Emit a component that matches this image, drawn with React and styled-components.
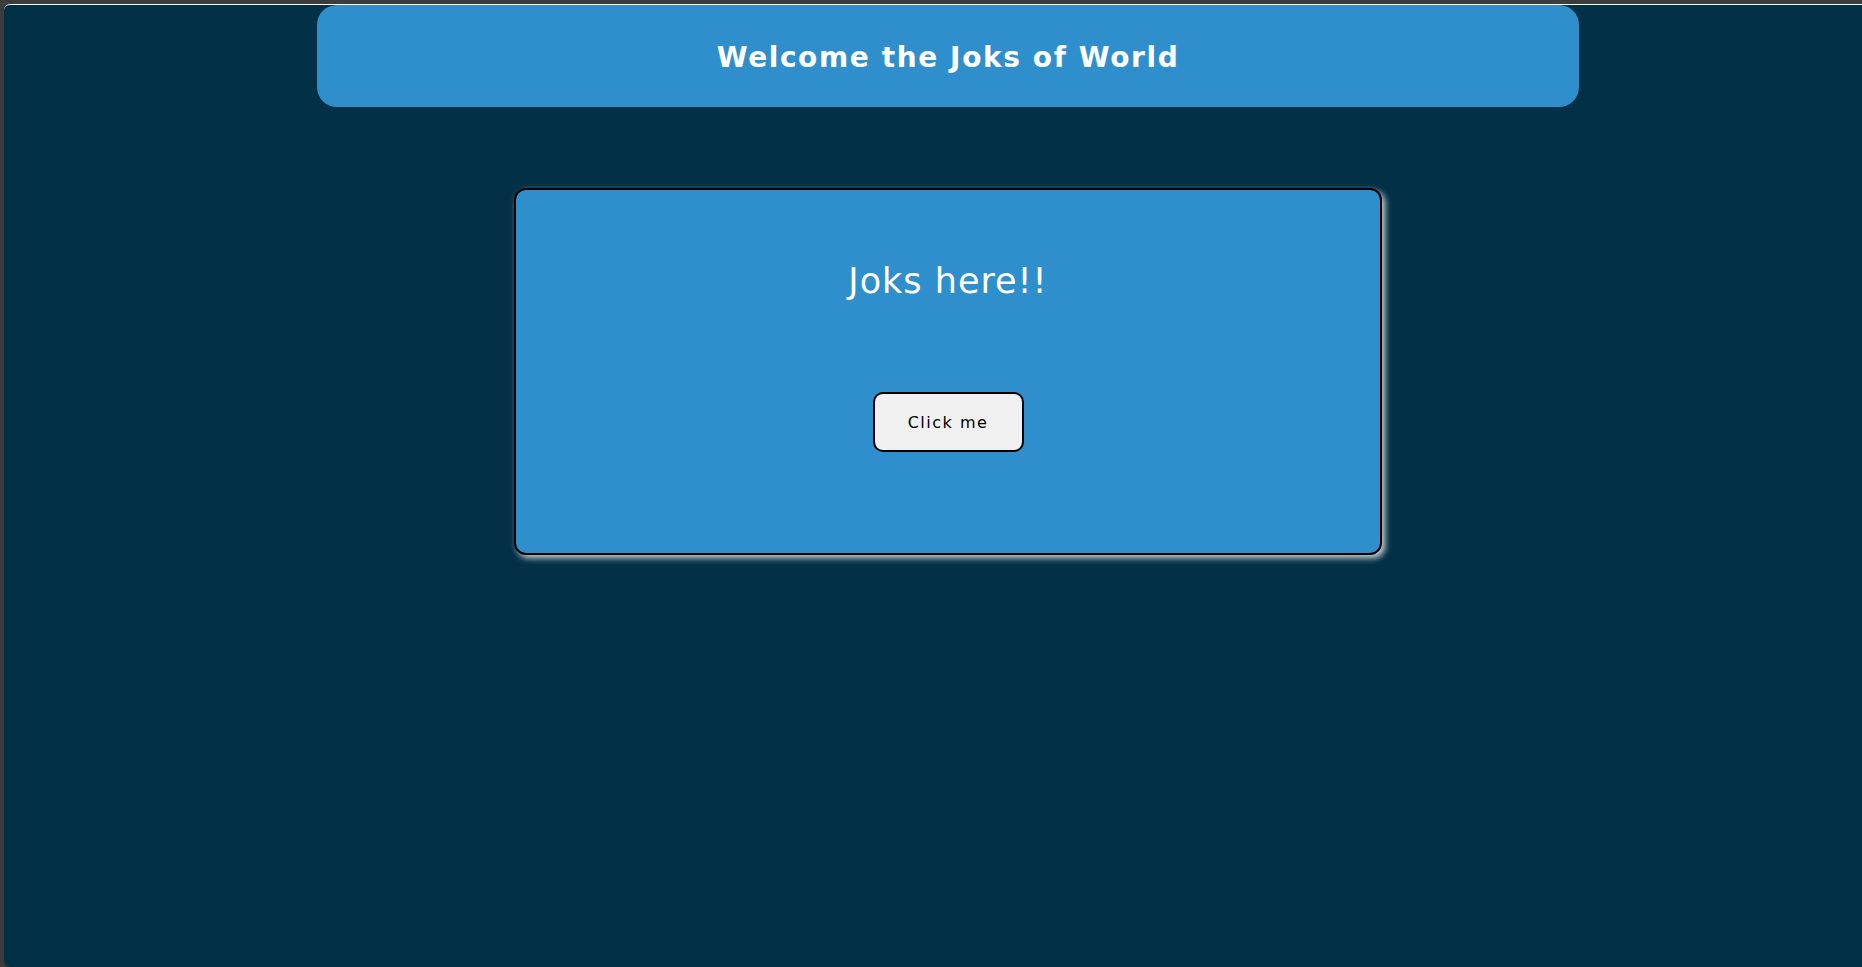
import React from 'react';
import styled, { createGlobalStyle } from 'styled-components';

const GlobalStyle = createGlobalStyle`
  html, body {
    margin: 0;
    padding: 0;
    background: #3c3c3c;
    height: 100%;
  }
  #root {
    height: 100%;
  }
`;

const Window = styled.div`
  box-sizing: border-box;
  height: calc(100vh - 4px);
  margin: 4px 0 0 4px;
  border-top: 1px solid #ffffff;
  border-radius: 6px 0 0 6px;
  background: #023047;
  font-family: 'DejaVu Sans', 'Open Sans', sans-serif;
  overflow: hidden;
`;

const Content = styled.main`
  display: flex;
  flex-direction: column;
  align-items: center;
  padding-left: 30px;
`;

const Header = styled.header`
  box-sizing: border-box;
  width: 1262px;
  height: 102px;
  background: #2f8fcc;
  border-radius: 20px;
  display: flex;
  align-items: center;
  justify-content: center;
  padding-top: 3px;

  h1 {
    margin: 0;
    color: #ffffff;
    font-size: 28px;
    font-weight: 700;
    letter-spacing: 1.6px;
  }
`;

const Card = styled.section`
  box-sizing: border-box;
  width: 868px;
  height: 367px;
  margin-top: 81px;
  background: #2f8fcc;
  border: 2px solid #000000;
  border-radius: 12px;
  box-shadow: 3px 3px 6px rgba(220, 220, 220, 0.95);
  display: flex;
  flex-direction: column;
  align-items: center;
  padding-top: 69px;
`;

const Title = styled.h2`
  margin: 0;
  height: 44px;
  line-height: 44px;
  color: #ffffff;
  font-size: 35px;
  font-weight: 400;
  letter-spacing: 1px;
`;

const Button = styled.button`
  box-sizing: border-box;
  margin-top: 89px;
  width: 151px;
  height: 60px;
  background: #f0f0f0;
  border: 2px solid #000000;
  border-radius: 10px;
  font-family: inherit;
  font-size: 16px;
  letter-spacing: 1.5px;
  color: #000000;
  cursor: pointer;
`;

function App() {
  return (
    <>
      <GlobalStyle />
      <Window>
        <Content>
          <Header>
            <h1>Welcome the Joks of World</h1>
          </Header>
          <Card>
            <Title>Joks here!!</Title>
            <Button type='button'>Click me</Button>
          </Card>
        </Content>
      </Window>
    </>
  );
}

export default App;
